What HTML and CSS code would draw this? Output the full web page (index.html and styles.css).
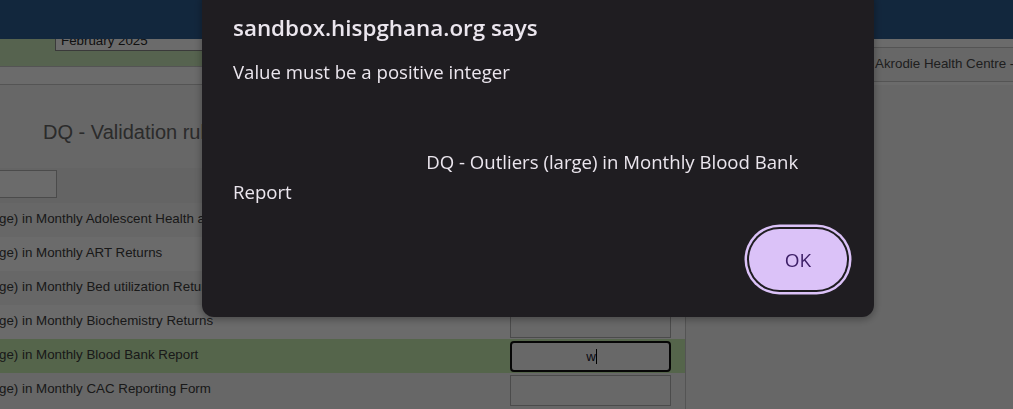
FILE: index.html
```html
<!DOCTYPE html>
<html lang="en">
<head>
<meta charset="utf-8">
<title>DQ - Validation rules</title>
<link rel="stylesheet" href="styles.css">
</head>
<body>
<div class="page">
  <header class="topbar"></header>
  <div class="filters">
    <div class="filters-left">
      <div class="period-band"><div class="period-select">February 2025</div></div>
      <div class="sub-band"></div>
    </div>
    <div class="filters-right">
      <div class="org-row">Akrodie Health Centre - Akrodie</div>
    </div>
  </div>
  <main class="content">
    <section class="form-area">
      <h1 class="form-title">DQ - Validation rules</h1>
      <div class="filter-row"><div class="filter-input"></div></div>
      <div class="row odd"><span class="label">ge) in Monthly Adolescent Health and Youth Report</span><span class="cell"></span></div>
      <div class="row even"><span class="label">ge) in Monthly ART Returns</span><span class="cell"></span></div>
      <div class="row odd"><span class="label">ge) in Monthly Bed utilization Returns</span><span class="cell"></span></div>
      <div class="row even"><span class="label">ge) in Monthly Biochemistry Returns</span><span class="cell"></span></div>
      <div class="row current"><span class="label">ge) in Monthly Blood Bank Report</span><span class="cell focused">w<span class="caret"></span></span></div>
      <div class="row odd"><span class="label">ge) in Monthly CAC Reporting Form</span><span class="cell"></span></div>
    </section>
    <aside class="side"></aside>
  </main>
</div>
<div class="backdrop"></div>
<div class="dialog" role="alertdialog">
  <div class="dialog-title">sandbox.hispghana.org says</div>
  <div class="dialog-message">Value must be a positive integer


                                        DQ - Outliers (large) in Monthly Blood Bank Report</div>
  <div class="dialog-footer"><button class="ok">OK</button></div>
</div>
</body>
</html>
```
FILE: styles.css
```css
* { box-sizing: border-box; margin: 0; padding: 0; }
html, body { width: 1013px; height: 409px; overflow: hidden; }
body {
  background: #f5f5f5;
  font-family: "Liberation Sans", Arial, sans-serif;
  font-size: 13.33px;
  color: #3c3c3c;
}
.topbar { height: 39px; background: #2d5d91; }
.filters { display: flex; }
.filters-left { flex: 1; }
.period-band {
  height: 27px;
  background: #cdecbc;
  overflow: hidden;
  padding-left: 55px;
}
.period-select {
  margin-top: -8px;
  width: 220px;
  height: 20px;
  border: 1px solid #8a8a8a;
  background: #fff;
  line-height: 18px;
  padding-left: 5px;
  color: #2a2a2a;
}
.sub-band {
  height: 19px;
  border-top: 1px solid #c8c8c8;
  border-bottom: 1px solid #c8c8c8;
  background: #fff;
}
.filters-right { width: 151px; padding-top: 8px; background: #fff; }
.org-row {
  height: 35px;
  border-top: 1px solid #c8c8c8;
  border-bottom: 1px solid #c8c8c8;
  line-height: 32px;
  padding-left: 13px;
  white-space: nowrap;
  overflow: hidden;
  color: #4a4a4a;
  background: #f5f5f5;
}
.content { display: flex; }
.form-area {
  width: 686px;
  border-right: 1px solid #c8c8c8;
  height: 330px;
}
.form-title {
  font-size: 20px;
  font-weight: normal;
  line-height: 24px;
  padding: 35px 0 0 43px;
  margin-bottom: 24px;
  color: #666;
}
.filter-row { height: 35px; padding-top: 2px; background: #efefef; }
.filter-input {
  margin-left: -23px;
  width: 80px;
  height: 28px;
  border: 1px solid #b3b3b3;
  background: #fff;
}
.row {
  display: flex;
  height: 34px;
  padding-top: 2px;
}
.row.odd { background: #f5f5f5; }
.row.even { background: #fff; }
.row.current { background: #cbf1b4; }
.label {
  flex: 1;
  margin-left: -1px;
  line-height: 28px;
  white-space: nowrap;
  overflow: hidden;
}
.cell {
  width: 161px;
  height: 31px;
  margin-right: 14px;
  border: 1px solid #b3b3b3;
  background: #f7f7f7;
}
.cell.focused {
  border: 2px solid #101010;
  border-radius: 4px;
  text-align: center;
  line-height: 27px;
  color: #1a2030;
  padding-left: 2px;
}
.caret {
  display: inline-block;
  width: 1px;
  height: 15px;
  background: #000;
  vertical-align: -3px;
}
.side { flex: 1; }
.backdrop {
  position: fixed;
  inset: 0;
  background: rgba(0, 0, 0, 0.58);
}
.dialog {
  position: fixed;
  left: 202px;
  top: -10px;
  width: 672px;
  background: #1f1d21;
  border-radius: 12px;
  padding: 24px 27px 27px 31px;
  box-shadow: 0 2px 8px rgba(0, 0, 0, 0.35);
  font-family: "Open Sans", "Noto Sans", sans-serif;
  color: #ebe6ee;
}
.dialog-title { font-size: 22.4px; font-weight: 600; line-height: 28px; }
.dialog-message {
  margin-top: 15px;
  font-size: 18.6px;
  line-height: 30px;
  white-space: pre-wrap;
}
.dialog-footer { margin-top: 22px; display: flex; justify-content: flex-end; }
.ok {
  width: 98px;
  height: 61px;
  border: none;
  border-radius: 31px;
  background: #dbc2f8;
  color: #3e2068;
  font-family: inherit;
  font-size: 19px;
  box-shadow: 0 0 0 2px #1f1d21, 0 0 0 4.5px #dbc2f8;
}
```
